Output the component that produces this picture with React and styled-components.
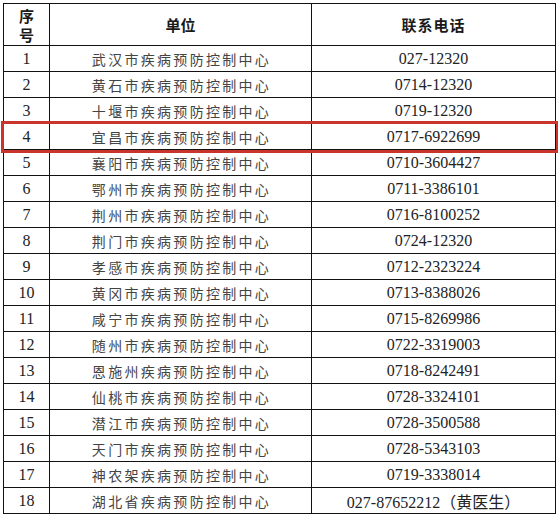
import styled, { createGlobalStyle } from 'styled-components';

const rows = [
  ['1', '武汉市疾病预防控制中心', '027-12320'],
  ['2', '黄石市疾病预防控制中心', '0714-12320'],
  ['3', '十堰市疾病预防控制中心', '0719-12320'],
  ['4', '宜昌市疾病预防控制中心', '0717-6922699'],
  ['5', '襄阳市疾病预防控制中心', '0710-3604427'],
  ['6', '鄂州市疾病预防控制中心', '0711-3386101'],
  ['7', '荆州市疾病预防控制中心', '0716-8100252'],
  ['8', '荆门市疾病预防控制中心', '0724-12320'],
  ['9', '孝感市疾病预防控制中心', '0712-2323224'],
  ['10', '黄冈市疾病预防控制中心', '0713-8388026'],
  ['11', '咸宁市疾病预防控制中心', '0715-8269986'],
  ['12', '随州市疾病预防控制中心', '0722-3319003'],
  ['13', '恩施州疾病预防控制中心', '0718-8242491'],
  ['14', '仙桃市疾病预防控制中心', '0728-3324101'],
  ['15', '潜江市疾病预防控制中心', '0728-3500588'],
  ['16', '天门市疾病预防控制中心', '0728-5343103'],
  ['17', '神农架疾病预防控制中心', '0719-3338014'],
  ['18', '湖北省疾病预防控制中心', '027-87652212（黄医生）'],
];

function App() {
  return (
    <Page>
      <GlobalStyle />
      <Table>
        <Row $header>
          <HeadCell>序<br />号</HeadCell>
          <HeadCell>单位</HeadCell>
          <HeadCell $spaced>联系电话</HeadCell>
        </Row>
        {rows.map(([no, unit, phone]) => (
          <Row key={no} $marked={no === '4'}>
            <Cell>{no}</Cell>
            <UnitCell>{unit}</UnitCell>
            <Cell>{phone}</Cell>
          </Row>
        ))}
      </Table>
    </Page>
  );
}

export default App;

const GlobalStyle = createGlobalStyle`
  body {
    margin: 0;
    background: #ffffff;
    font-family: "Liberation Serif", "Noto Sans CJK SC", serif;
  }
`;

const Page = styled.div`
  width: 558px;
  height: 517px;
  padding: 3px;
  box-sizing: border-box;
  background: #ffffff;
`;

const Table = styled.div`
  width: 553px;
  box-sizing: border-box;
  border-top: 1px solid #111;
  border-left: 1px solid #111;
`;

const Row = styled.div`
  display: grid;
  grid-template-columns: 46px 262px 244px;
  height: ${(p) => (p.$header ? '42px' : '26px')};
  outline: ${(p) => (p.$marked ? '3px solid #c9352c' : 'none')};
`;

const Cell = styled.div`
  display: flex;
  align-items: center;
  justify-content: center;
  box-sizing: border-box;
  border-right: 1px solid #111;
  border-bottom: 1px solid #111;
  font-size: 16px;
  color: #222;
  white-space: nowrap;
`;

const UnitCell = styled(Cell)`
  font-family: "Noto Sans CJK SC", sans-serif;
  font-size: 14px;
  letter-spacing: 2.3px;
  padding-left: 2px;
  color: #444;
`;

const HeadCell = styled(Cell)`
  font-family: "Noto Sans CJK SC", sans-serif;
  font-weight: 700;
  font-size: 15px;
  line-height: 19px;
  text-align: center;
  color: #1a1a1a;
  letter-spacing: ${(p) => (p.$spaced ? '1px' : '0')};
`;
